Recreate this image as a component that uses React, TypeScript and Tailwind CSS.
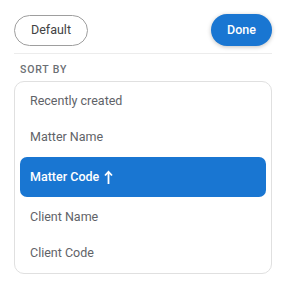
import React, { useState } from 'react';

const options = ['Recently created', 'Matter Name', 'Matter Code', 'Client Name', 'Client Code'];

export default function App() {
  const [selected, setSelected] = useState('Matter Code');

  return (
    <div className="w-[286px] h-[300px] bg-white px-[14px] pt-[14px] font-['Roboto',sans-serif]">
      <div className="flex items-center justify-between">
        <button className="h-[31px] px-[16px] rounded-full border border-[#9e9e9e] text-[12.5px] text-[#424242] bg-white">
          Default
        </button>
        <button className="h-[32px] px-[16px] rounded-full bg-[#1976d2] text-white text-[12.5px] font-medium shadow-[0_1px_4px_rgba(0,0,0,0.25)]">
          Done
        </button>
      </div>

      <div className="mt-[7px] h-px bg-[#ececec]" />

      <div className="mt-[8px] px-[6px] text-[10.5px] leading-4 font-medium tracking-[0.08em] text-[#6b6f74]">
        SORT BY
      </div>

      <div className="mt-[3px] rounded-[10px] border border-[#e0e0e0] px-[5px] pt-px pb-[2px]">
        {options.map((opt) => {
          const active = opt === selected;
          return (
            <div
              key={opt}
              onClick={() => setSelected(opt)}
              className={
                active
                  ? 'my-[2px] h-10 flex items-center gap-[3px] rounded-[7px] bg-[#1976d2] px-[10px] text-[12.5px] font-medium text-white'
                  : 'h-9 flex items-center px-[10px] text-[12.5px] text-[#5f6368]'
              }
            >
              {opt}
              {active && (
                <svg width="9" height="15" viewBox="0 0 9 15" fill="none" className="ml-[2px]">
                  <path d="M4.5 14V2" stroke="white" strokeWidth="1.8" />
                  <path d="M1 5.5L4.5 1.8L8 5.5" stroke="white" strokeWidth="1.8" fill="none" />
                </svg>
              )}
            </div>
          );
        })}
      </div>
    </div>
  );
}
